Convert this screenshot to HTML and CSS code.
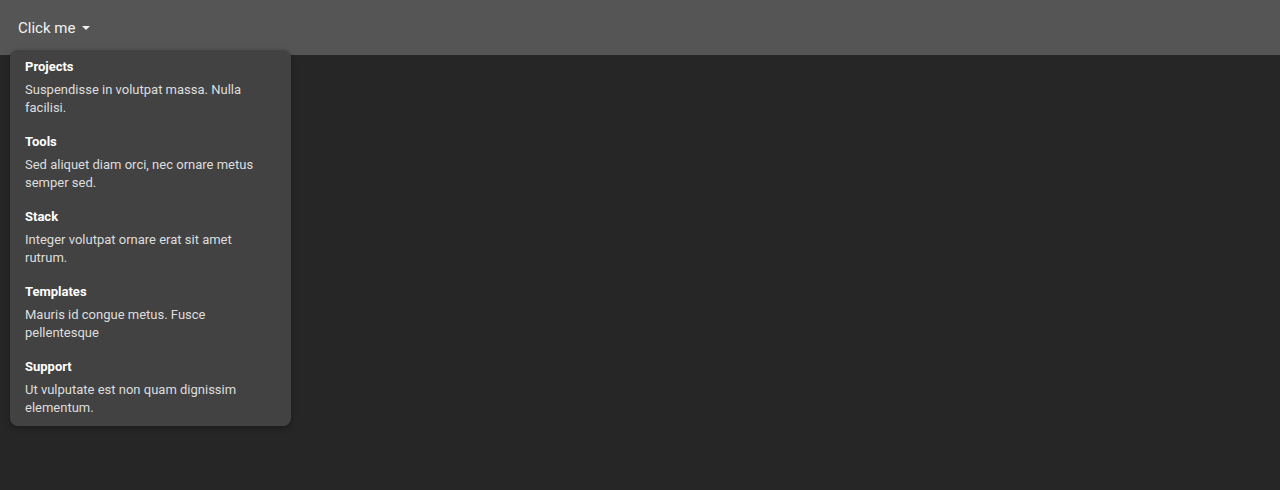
FILE: index.html
```html
<!DOCTYPE html>
<html>
<head>
<meta charset="utf-8">
<link rel="stylesheet" href="styles.css">
</head>
<body>
<header class="bar">
  <button class="trigger">Click me <svg class="caret" width="8" height="4" viewBox="0 0 8 4"><path d="M0 0h8L4 4z" fill="#f0f0f0"/></svg></button>
</header>
<div class="menu">
  <div class="item">
    <div class="title">Projects</div>
    <div class="desc">Suspendisse in volutpat massa. Nulla facilisi.</div>
  </div>
  <div class="item">
    <div class="title">Tools</div>
    <div class="desc">Sed aliquet diam orci, nec ornare metus semper sed.</div>
  </div>
  <div class="item">
    <div class="title">Stack</div>
    <div class="desc">Integer volutpat ornare erat sit amet rutrum.</div>
  </div>
  <div class="item">
    <div class="title">Templates</div>
    <div class="desc">Mauris id congue metus. Fusce pellentesque</div>
  </div>
  <div class="item">
    <div class="title">Support</div>
    <div class="desc">Ut vulputate est non quam dignissim elementum.</div>
  </div>
</div>
</body>
</html>
```
FILE: styles.css
```css
html, body {
  margin: 0;
  height: 100%;
}
body {
  background: #262626;
  font-family: Roboto, "Liberation Sans", sans-serif;
  color: #f2f2f2;
}
.bar {
  height: 55px;
  background: #555555;
  display: flex;
  align-items: center;
  padding: 0 18px;
}
.trigger {
  background: none;
  border: none;
  padding: 0;
  font: 400 15px Roboto, sans-serif;
  color: #f2f2f2;
  display: flex;
  align-items: center;
  gap: 7px;
}
.caret {
  display: block;
}
.menu {
  position: absolute;
  top: 50px;
  left: 10px;
  width: 281px;
  box-sizing: border-box;
  background: #424242;
  border-radius: 8px;
  padding: 8px 15px 9px;
  box-shadow: 0 2px 6px rgba(0,0,0,0.3);
}
.item {
  padding: 0 0 16px;
}
.item:last-child {
  padding-bottom: 0;
}
.title {
  font-size: 13px;
  font-weight: 700;
  line-height: 18px;
  color: #ffffff;
  margin-bottom: 5px;
}
.desc {
  font-size: 13px;
  line-height: 18px;
  color: #dedede;
}
```
